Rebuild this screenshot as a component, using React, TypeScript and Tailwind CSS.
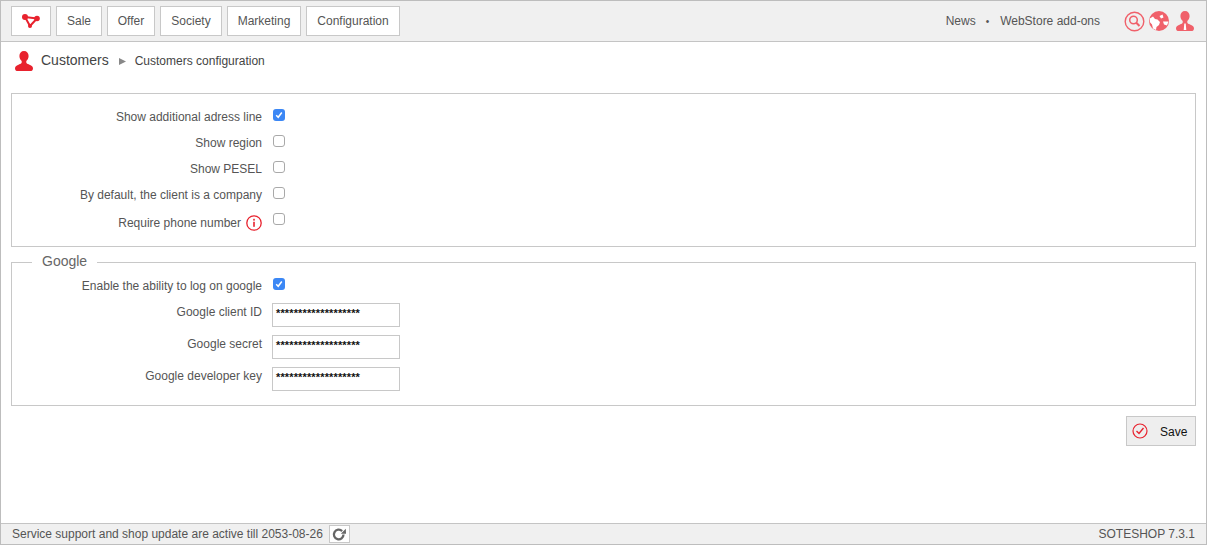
import React from "react";

const font = "font-['Liberation_Sans',Arial,sans-serif]";

function NavBtn({ children, w }: { children: React.ReactNode; w: string }) {
  return (
    <div className={`${w} h-[30px] flex items-center justify-center border border-[#c8c8c8] bg-white text-[12px] text-[#555]`}>
      {children}
    </div>
  );
}

function Logo() {
  return (
    <svg width="18" height="14" viewBox="0 0 18 14" fill="none">
      <path d="M3 3 L15 4.5 L8 12 Z" stroke="#e8222e" strokeWidth="2" />
      <circle cx="3" cy="3" r="3" fill="#e8222e" />
      <circle cx="15" cy="4.5" r="2.800" fill="#e8222e" />
      <circle cx="8" cy="12" r="2" fill="#e8222e" />
    </svg>
  );
}

function Person({ width, height, color, tie }: { width: number; height: number; color: string; tie?: boolean }) {
  return (
    <svg width={width} height={height} viewBox="0 0 18 20">
      <path
        d="M9 0c-2.800 0-4.600 2-4.600 5 0 2.200 1 4 2.300 5v1.600c0 .9-1.100 1.400-3.200 2.100C1.200 14.500 0 15.600 0 17.400 0 19 1.100 20 2.800 20h12.400c1.700 0 2.800-1 2.800-2.600 0-1.800-1.200-2.900-3.500-3.700-2.100-.7-3.200-1.200-3.200-2.100V10c1.300-1 2.300-2.800 2.300-5 0-3-1.800-5-4.600-5z"
        fill={color}
      />
      {tie && <path d="M8.300 12.500h1.400l.6 6.500H7.700z" fill="#fff" />}
    </svg>
  );
}

function Check({ on }: { on?: boolean }) {
  return on ? (
    <span className="w-3 h-3 rounded-[3px] bg-[#3b87f5] flex items-center justify-center">
      <svg width="8" height="8" viewBox="0 0 8 8" fill="none">
        <path d="M1.200 4.300 L3.200 6.300 L6.800 1.500" stroke="#fff" strokeWidth="1.500" />
      </svg>
    </span>
  ) : (
    <span className="w-3 h-3 rounded-[3px] border border-[#a9a9a9] bg-white" />
  );
}

function CheckRow({ label, on, info, shift }: { label: string; on?: boolean; info?: boolean; shift?: string }) {
  return (
    <div className="h-[26px] flex">
      <div className={`w-[250px] flex justify-end items-center gap-[5px] h-[20px] ${shift ?? ""}`}>
        <span>{label}</span>
        {info && (
          <svg width="16" height="16" viewBox="0 0 16 16" fill="none">
            <circle cx="8" cy="8" r="7.200" stroke="#e8222e" strokeWidth="1.300" />
            <rect x="7.200" y="6.800" width="1.600" height="5" fill="#e8222e" />
            <rect x="7.200" y="3.800" width="1.600" height="1.800" fill="#e8222e" />
          </svg>
        )}
      </div>
      <div className="ml-[11px] h-[16px] flex items-center">
        <Check on={on} />
      </div>
    </div>
  );
}

function PassRow({ label }: { label: string }) {
  return (
    <div className="h-[32px] flex">
      <div className="w-[250px] text-right leading-[18px]">{label}</div>
      <div className="ml-[10px] w-[128px] h-[24px] border border-[#c8c8c8] bg-white pl-[3px] flex items-center text-[#111] font-bold text-[11px] tracking-[0.14px] leading-none pb-[4px]">
        *******************
      </div>
    </div>
  );
}

export default function App() {
  return (
    <div className={`${font} w-[1207px] h-[545px] border border-[#bdbdbd] bg-white flex flex-col text-[12px] text-[#555] overflow-hidden`}>
      <header className="h-[41px] shrink-0 bg-[#f0f0f0] border-b border-[#c4c4c4] flex items-start pt-[5px] pl-[10px] pr-[11px]">
        <div className="flex gap-[5px]">
          <NavBtn w="w-[40px]"><Logo /></NavBtn>
          <NavBtn w="w-[46px]">Sale</NavBtn>
          <NavBtn w="w-[48px]">Offer</NavBtn>
          <NavBtn w="w-[62px]">Society</NavBtn>
          <NavBtn w="w-[74px]">Marketing</NavBtn>
          <NavBtn w="w-[94px]">Configuration</NavBtn>
        </div>
        <div className="ml-auto flex items-center h-[30px]">
          <span>News</span>
          <span className="ml-[10px] mr-[11px] text-[10px]">•</span>
          <span>WebStore add-ons</span>
          <div className="ml-[24px] flex items-center gap-[4px]">
            <svg width="21" height="21" viewBox="0 0 21 21" fill="none">
              <circle cx="10.500" cy="10.500" r="9.300" stroke="#f0606a" strokeWidth="1.400" />
              <circle cx="9.500" cy="9" r="3.800" stroke="#f0606a" strokeWidth="1.500" />
              <path d="M12.300 11.800 L15.500 15" stroke="#f0606a" strokeWidth="2" />
            </svg>
            <svg width="20" height="20" viewBox="0 0 20 20">
              <circle cx="10" cy="10" r="10" fill="#f0606a" />
              <path d="M0.800 7.500 L4 5.500 L6 8 L8.500 8.500 L11 11 L10 14 L7.500 16 L7 19 L4 17.500 L3 13.500 L0.800 11z" fill="#fff" />
              <path d="M10.500 5 L13.500 3.500 L14.500 6.500 L12 7.500z" fill="#fff" />
              <path d="M14 10.500 L19.500 10.500 L18 14.500 L15 13.500z" fill="#fff" />
            </svg>
            <span className="ml-[2px] flex">
              <Person width={20} height={20} color="#f0606a" tie />
            </span>
          </div>
        </div>
      </header>

      <main className="flex-1 min-h-0 flex flex-col px-[10px]">
        <div className="h-[51px] shrink-0 flex items-start pt-[9px] pl-[4px]">
          <Person width={18} height={20} color="#e8222e" />
          <span className="ml-[8px] -mt-[1px] text-[14px] leading-[20px] text-[#444]">Customers</span>
          <svg className="ml-[10px] mt-[7px]" width="7" height="7" viewBox="0 0 7 7">
            <path d="M0 0 L7 3.500 L0 7 Z" fill="#888" />
          </svg>
          <span className="ml-[9px] leading-[20px] text-[#444]">Customers configuration</span>
        </div>

        <section className="h-[154px] shrink-0 border border-[#c8c8c8] pt-[13px]">
          <CheckRow label="Show additional adress line" on />
          <CheckRow label="Show region" />
          <CheckRow label="Show PESEL" />
          <CheckRow label="By default, the client is a company" />
          <CheckRow label="Require phone number" info shift="mt-[2px]" />
        </section>

        <fieldset className="mt-[7px] h-[152px] shrink-0 border border-[#c8c8c8] pl-0 relative">
          <legend className="ml-[20px] px-[10px] pb-[2px] text-[14px] leading-[14px] text-[#666]">Google</legend>
          <div className="pt-[6px]">
            <div className="h-[27px] flex">
              <div className="w-[250px] text-right leading-[20px]">Enable the ability to log on google</div>
              <div className="ml-[11px] h-[16px] flex items-center">
                <Check on />
              </div>
            </div>
            <PassRow label="Google client ID" />
            <PassRow label="Google secret" />
            <PassRow label="Google developer key" />
          </div>
        </fieldset>

        <div className="mt-[10px] flex justify-end">
          <button className="w-[70px] h-[30px] bg-[#eeeeee] border border-[#c8c8c8] flex items-center pl-[5px] text-[12px] text-[#111]">
            <svg width="16" height="16" viewBox="0 0 16 16" fill="none">
              <circle cx="8" cy="8" r="7" stroke="#e8222e" strokeWidth="1.200" />
              <path d="M4.500 8 L7 10.500 L11.500 5" stroke="#e8222e" strokeWidth="1.400" />
            </svg>
            <span className="ml-[12px] pt-[2px]">Save</span>
          </button>
        </div>
      </main>

      <footer className="h-[21px] shrink-0 bg-[#f0f0f0] border-t border-[#c4c4c4] flex items-center pl-[11px] pr-[11px]">
        <span>Service support and shop update are active till 2053-08-26</span>
        <span className="ml-[6px] w-[21px] h-[18px] bg-white border border-[#c8c8c8] flex items-center justify-center">
          <svg width="14" height="13" viewBox="0 0 14 13" fill="none">
            <path d="M11.500 6.500a4.800 4.800 0 1 1-1.400-3.400" stroke="#666" strokeWidth="2.300" />
            <path d="M14 5.800H8.800L13.800 .8z" fill="#666" />
          </svg>
        </span>
        <span className="ml-auto">SOTESHOP 7.3.1</span>
      </footer>
    </div>
  );
}
